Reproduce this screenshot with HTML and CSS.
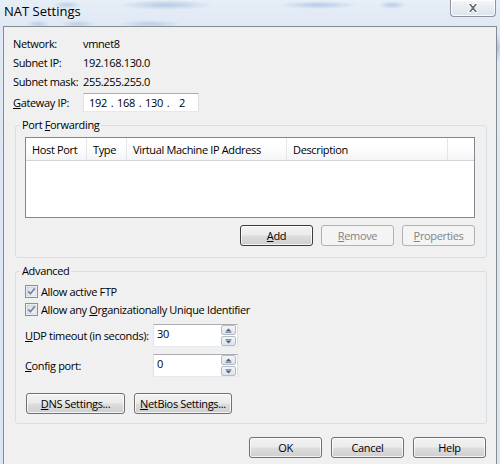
FILE: index.html
```html
<!DOCTYPE html>
<html>
<head>
<meta charset="utf-8">
<title>NAT Settings</title>
<link rel="stylesheet" href="styles.css">
</head>
<body>
<div class="titlebar">
  <span class="title">NAT Settings</span>
  <div class="close">
    <svg width="16" height="12" viewBox="0 0 16 12">
      <path d="M3 1.5 L6 1.5 L8 4 L10 1.5 L13 1.5 L9.6 6 L13 10.5 L10 10.5 L8 8 L6 10.5 L3 10.5 L6.4 6 Z" fill="#6b6f74" stroke="#ffffff" stroke-width="1" stroke-linejoin="round"/>
    </svg>
  </div>
</div>
<div class="window">
  <div class="info">
    <div class="row"><span class="lbl">Network:</span><span>vmnet8</span></div>
    <div class="row"><span class="lbl">Subnet IP:</span><span>192.168.130.0</span></div>
    <div class="row"><span class="lbl">Subnet mask:</span><span>255.255.255.0</span></div>
    <div class="row gw">
      <span class="lbl"><u>G</u>ateway IP:</span>
      <div class="ipbox">
        <span class="oct">192</span><span class="dot">.</span>
        <span class="oct">168</span><span class="dot">.</span>
        <span class="oct">130</span><span class="dot">.</span>
        <span class="oct">2</span>
      </div>
    </div>
  </div>

  <fieldset class="group pf">
    <legend>Port <u>F</u>orwarding</legend>
    <div class="table">
      <div class="thead">
        <div class="th c1">Host Port</div>
        <div class="th c2">Type</div>
        <div class="th c3">Virtual Machine IP Address</div>
        <div class="th c4">Description</div>
        <div class="th c5"></div>
      </div>
    </div>
    <div class="btnrow end">
      <button class="btn default"><u>A</u>dd</button>
      <button class="btn disabled"><u>R</u>emove</button>
      <button class="btn disabled"><u>P</u>roperties</button>
    </div>
  </fieldset>

  <fieldset class="group adv">
    <legend>Advanced</legend>
    <div class="check">
      <svg class="box" width="13" height="13" viewBox="0 0 13 13">
        <defs><linearGradient id="cb" x1="0" y1="0" x2="1" y2="1"><stop offset="0" stop-color="#d9dde3"/><stop offset="1" stop-color="#f7f7f7"/></linearGradient></defs>
        <rect x="0.5" y="0.5" width="12" height="12" fill="#fff" stroke="#8e8f8f"/>
        <rect x="2" y="2" width="9" height="9" fill="url(#cb)" stroke="#b8bcc2" stroke-width="0.6"/>
        <path d="M3.3 6.4 L5.4 8.8 L9.8 3.4" fill="none" stroke="#7585a3" stroke-width="1.7" stroke-linejoin="round"/>
      </svg>
      <span>Allow active FTP</span>
    </div>
    <div class="check">
      <svg class="box" width="13" height="13" viewBox="0 0 13 13">
        <rect x="0.5" y="0.5" width="12" height="12" fill="#fff" stroke="#8e8f8f"/>
        <rect x="2" y="2" width="9" height="9" fill="url(#cb)" stroke="#b8bcc2" stroke-width="0.6"/>
        <path d="M3.3 6.4 L5.4 8.8 L9.8 3.4" fill="none" stroke="#7585a3" stroke-width="1.7" stroke-linejoin="round"/>
      </svg>
      <span>Allow any <u>O</u>rganizationally Unique Identifier</span>
    </div>
    <div class="spinrow first">
      <span class="slbl"><u>U</u>DP timeout (in seconds):</span>
      <div class="spin">
        <span class="val">30</span>
        <div class="arrows">
          <span class="arr up"><svg width="7" height="5" viewBox="0 0 7 5"><path d="M0.5 3.5 L3.5 0.5 L6.5 3.5 Z" fill="#4f5e78"/><rect x="0.5" y="4" width="6" height="1" fill="#8a97ad"/></svg></span>
          <span class="arr down"><svg width="7" height="5" viewBox="0 0 7 5"><rect x="0.5" y="0" width="6" height="1" fill="#8a97ad"/><path d="M0.5 1.5 L3.5 4.5 L6.5 1.5 Z" fill="#4f5e78"/></svg></span>
        </div>
      </div>
    </div>
    <div class="spinrow">
      <span class="slbl"><u>C</u>onfig port:</span>
      <div class="spin">
        <span class="val">0</span>
        <div class="arrows">
          <span class="arr up"><svg width="7" height="5" viewBox="0 0 7 5"><path d="M0.5 3.5 L3.5 0.5 L6.5 3.5 Z" fill="#4f5e78"/><rect x="0.5" y="4" width="6" height="1" fill="#8a97ad"/></svg></span>
          <span class="arr down"><svg width="7" height="5" viewBox="0 0 7 5"><rect x="0.5" y="0" width="6" height="1" fill="#8a97ad"/><path d="M0.5 1.5 L3.5 4.5 L6.5 1.5 Z" fill="#4f5e78"/></svg></span>
        </div>
      </div>
    </div>
    <div class="btnrow dns">
      <button class="btn w99"><u>D</u>NS Settings...</button>
      <button class="btn w98"><u>N</u>etBios Settings...</button>
    </div>
  </fieldset>

  <div class="footer">
    <button class="btn">OK</button>
    <button class="btn">Cancel</button>
    <button class="btn">Help</button>
  </div>
</div>
</body>
</html>
```

FILE: styles.css
```css
* { box-sizing: border-box; }
html, body { margin: 0; padding: 0; }
body {
  width: 500px;
  height: 464px;
  overflow: hidden;
  font-family: "Open Sans", "Noto Sans", sans-serif;
  font-size: 11px;
  letter-spacing: -0.35px;
  color: #000;
  background:
    radial-gradient(ellipse 3px 14px at 498px 48px, rgba(120,165,220,0.55), rgba(120,165,220,0) 100%),
    linear-gradient(180deg, #e6eef7 0, #dfe9f4 26px, #d9e5f2 100%);
}

/* title bar */
.titlebar {
  height: 26px;
  display: flex;
  justify-content: space-between;
  align-items: flex-start;
  padding: 0 4px 0 4px;
  background-image:
    radial-gradient(ellipse 14px 4px at 67px 5px, rgba(150,180,215,0.55), rgba(150,180,215,0)),
    radial-gradient(ellipse 48px 5px at 166px 5px, rgba(150,180,215,0.6), rgba(150,180,215,0)),
    radial-gradient(ellipse 40px 4px at 318px 5px, rgba(150,180,215,0.6), rgba(150,180,215,0)),
    radial-gradient(ellipse 14px 4px at 392px 5px, rgba(150,180,215,0.55), rgba(150,180,215,0)),
    radial-gradient(ellipse 12px 4px at 38px 24px, rgba(150,180,215,0.5), rgba(150,180,215,0)),
    radial-gradient(ellipse 18px 4px at 78px 24px, rgba(150,180,215,0.5), rgba(150,180,215,0)),
    radial-gradient(ellipse 32px 4px at 150px 24px, rgba(150,180,215,0.5), rgba(150,180,215,0));
}
.title {
  font-size: 13px;
  line-height: 16px;
  margin-top: 3px;
  letter-spacing: 0;
  color: #000;
}
.close {
  width: 46px;
  height: 17px;
  border: 1px solid #8d949c;
  border-top: none;
  border-radius: 0 0 4px 4px;
  background: linear-gradient(180deg, #f4f7fa 0%, #e6ecf2 50%, #dde4eb 100%);
  box-shadow: inset 0 0 0 1px rgba(255,255,255,0.8);
  display: flex;
  align-items: center;
  justify-content: center;
}

/* window */
.window {
  margin: 0 3px;
  height: 438px;
  border: 1px solid #868b91;
  border-bottom: none;
  background: #f0f0f0;
}

.info { padding: 7px 0 0 9px; }
.row {
  display: flex;
  align-items: center;
  height: 19px;
  line-height: 19px;
}
.lbl { width: 70px; }
.row.gw { margin-top: 2px; }
.ipbox {
  width: 116px;
  height: 19px;
  background: #fff;
  border: 1px solid;
  border-color: #abadb3 #dbdfe6 #e3e9ef #e2e3ea;
  display: flex;
  align-items: center;
  padding-left: 4px;
  line-height: 17px;
}
.oct { width: 20px; text-align: center; }
.dot { width: 8px; text-align: center; }

/* group boxes */
.group {
  margin: 6px 9px 0 11px;
  border: 1px solid #d5dfe5;
  border-radius: 3px;
  min-width: 0;
}
.group legend {
  padding: 0 2px;
  margin-left: -5px;
  line-height: 14px;
}
.pf { padding: 5px 11px 11px 9px; }
.adv { padding: 4px 11px 9px 9px; }

/* list view */
.table {
  height: 81px;
  border: 1px solid #828790;
  background: #fff;
}
.thead {
  display: flex;
  height: 23px;
  background: linear-gradient(180deg, #ffffff 0%, #fdfdfd 50%, #f3f4f6 100%);
  border-bottom: 1px solid #d5d5d5;
}
.th {
  border-right: 1px solid #e3e5e7;
  padding: 2px 0 0 6px;
  line-height: 20px;
  white-space: nowrap;
}
.c1 { width: 61px; }
.c2 { width: 40px; }
.c3 { width: 160px; }
.c4 { width: 161px; }
.c5 { flex: 1; border-right: none; }

/* buttons */
.btnrow { display: flex; gap: 8px; }
.btnrow.end { justify-content: flex-end; margin-top: 7px; }
.btn {
  width: 73px;
  height: 21px;
  padding: 0;
  font: inherit;
  letter-spacing: inherit;
  color: #000;
  border: 1px solid #707070;
  border-radius: 3px;
  background: linear-gradient(180deg, #f2f2f2 0%, #ebebeb 48%, #dddddd 52%, #cfcfcf 100%);
  box-shadow: inset 0 0 0 1px rgba(255,255,255,0.75);
  line-height: 19px;
}
.btn.default { border-color: #3c3c3c; }
.btn.disabled {
  color: #838383;
  border-color: #adb2b5;
  background: #f4f4f4;
  box-shadow: none;
}
.btnrow.dns { margin-top: 16px; gap: 9px; padding-left: 1px; }
.btn.w99 { width: 99px; }
.btn.w98 { width: 98px; }

/* checkboxes */
.check {
  display: flex;
  align-items: center;
  gap: 3px;
  height: 18px;
}
.box { flex: none; }

/* spin boxes */
.spinrow {
  display: flex;
  align-items: center;
  height: 23px;
  margin-top: 7px;
}
.spinrow.first { margin-top: 6px; }
.slbl { width: 128px; white-space: nowrap; }
.spin {
  width: 85px;
  height: 23px;
  background: #fff;
  border: 1px solid;
  border-color: #abadb3 #dbdfe6 #e3e9ef #e2e3ea;
  display: flex;
  justify-content: space-between;
  padding: 0 1px 0 3px;
}
.val { line-height: 18px; }
.arrows {
  display: flex;
  flex-direction: column;
  width: 15px;
}
.arr {
  height: 10px;
  border: 1px solid #b5bcc6;
  border-radius: 2px;
  background: linear-gradient(180deg, #f4f6f9 0%, #e7ecf1 50%, #dde3ea 100%);
  display: flex;
  align-items: center;
  justify-content: center;
}
.arr.down { margin-top: 1px; }

/* footer */
.footer {
  display: flex;
  justify-content: flex-end;
  gap: 9px;
  padding: 13px 10px 0 0;
}
```
